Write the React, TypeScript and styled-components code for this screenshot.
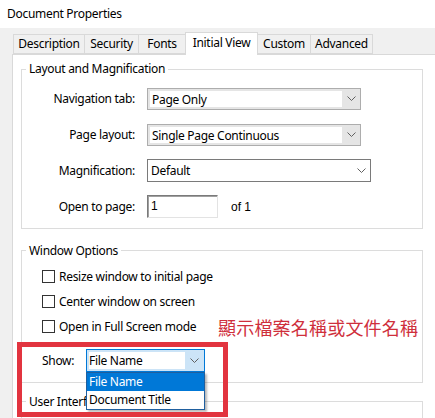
import React from "react";
import styled, { createGlobalStyle } from "styled-components";

const GlobalStyle = createGlobalStyle`
  html, body { margin: 0; padding: 0; background: #f0f0f0; }
  body { font-family: "Noto Sans", "Segoe UI", Arial, sans-serif; font-size: 12px; letter-spacing: -0.3px; color: #000; }
  * { box-sizing: border-box; }
`;

const Window = styled.div`
  position: relative;
  width: 435px;
  height: 418px;
  overflow: hidden;
  background: #f0f0f0;
  display: flex;
  flex-direction: column;
`;

const TitleBar = styled.div`
  height: 28px;
  line-height: 27px;
  padding-left: 7px;
  background: #ffffff;
  font-size: 12px;
  flex: none;
`;

const Body = styled.div`
  flex: 1;
  display: flex;
  flex-direction: column;
  padding: 4px 0 0 12px;
`;

const TabStrip = styled.div`
  display: flex;
  align-items: flex-end;
  height: 22px;
  padding-left: 1px;
  flex: none;
`;

const Tab = styled.div<{ $w: number; $active?: boolean }>`
  width: ${(p) => p.$w}px;
  height: ${(p) => (p.$active ? 23 : 20)}px;
  margin-bottom: ${(p) => (p.$active ? -1 : 0)}px;
  margin-right: -1px;
  position: relative;
  z-index: ${(p) => (p.$active ? 2 : 1)};
  border: 1px solid #d9d9d9;
  border-bottom: ${(p) => (p.$active ? "none" : "1px solid #d9d9d9")};
  background: ${(p) => (p.$active ? "#ffffff" : "#f0f0f0")};
  text-align: center;
  line-height: ${(p) => (p.$active ? 19 : 18)}px;
  white-space: nowrap;
`;

const Panel = styled.div`
  flex: 1;
  background: #ffffff;
  border-top: 1px solid #d9d9d9;
  border-left: 1px solid #d9d9d9;
  padding: 6px 12px 0 8px;
`;

const Group = styled.fieldset<{ $gap?: number }>`
  margin: ${(p) => p.$gap ?? 0}px 0 0 0;
  padding: 0;
  border: 1px solid #dcdcdc;
  min-width: 0;
`;

const Legend = styled.legend`
  margin-left: 4px;
  padding: 0 3px;
  font-size: 12px;
  line-height: 16px;
`;

const FormGrid = styled.div`
  display: grid;
  grid-template-columns: 113px max-content;
  grid-auto-rows: 36px;
  column-gap: 12px;
  align-items: center;
  padding: 3.5px 0 3px 0;
`;

const Label = styled.div`
  text-align: right;
  white-space: nowrap;
`;

const Chevron = () => (
  <svg width="9" height="5" viewBox="0 0 9 5" aria-hidden="true">
    <path d="M0.5 0.5 L4.5 4.5 L8.5 0.5" fill="none" stroke="#606060" strokeWidth="1" />
  </svg>
);

const ComboFrame = styled.div<{ $w: number }>`
  width: ${(p) => p.$w}px;
  height: 22px;
  display: flex;
  padding: 2px 0 2px 2px;
  border: 1px solid #adadad;
  background: #e5e5e5;
`;

const ComboField = styled.div`
  flex: 1;
  background: #ffffff;
  padding-left: 2px;
  line-height: 18px;
  white-space: nowrap;
`;

const ComboArrow = styled.div<{ $w: number }>`
  width: ${(p) => p.$w}px;
  display: flex;
  align-items: center;
  justify-content: center;
`;

const PlainSelect = styled.div<{ $w: number }>`
  width: ${(p) => p.$w}px;
  height: 23px;
  display: flex;
  align-items: center;
  border: 1px solid #7a7a7a;
  background: #ffffff;
  padding-left: 3px;
  line-height: 21px;
`;

const PlainText = styled.div`
  flex: 1;
`;

const PageRow = styled.div`
  display: flex;
  align-items: center;
  gap: 13px;
`;

const PageInput = styled.div`
  width: 71px;
  height: 23px;
  border: 1px solid;
  border-color: #7a7a7a #e3e3e3 #e3e3e3 #7a7a7a;
  box-shadow: inset 1px 1px 0 #a0a0a0;
  padding-left: 3px;
  font-family: "Liberation Sans", Arial, sans-serif;
  letter-spacing: 0;
  line-height: 21px;
`;

const ClassicText = styled.span`
  font-family: "Liberation Sans", Arial, sans-serif;
  letter-spacing: 0;
`;

const CheckList = styled.div`
  display: flex;
  flex-direction: column;
  padding: 5px 0 0 20px;
`;

const CheckRow = styled.label`
  height: 25px;
  display: flex;
  align-items: center;
  gap: 4px;
  white-space: nowrap;
`;

const Box = styled.span`
  width: 13px;
  height: 13px;
  border: 1px solid #333333;
  background: #ffffff;
  flex: none;
`;

const ShowRow = styled.div`
  display: flex;
  align-items: center;
  margin: 10px 0 10px 20px;
`;

const ShowLabel = styled.div`
  width: 44px;
`;

const ShowWrap = styled.div`
  position: relative;
`;

const FocusCombo = styled.div`
  width: 119px;
  height: 23px;
  display: flex;
  padding: 2px 0 2px 2px;
  border: 1px solid #0078d7;
  background: #cce4f7;
`;

const FocusField = styled.div`
  flex: 1;
  background: #ffffff;
  padding-left: 0px;
  line-height: 17px;
  white-space: nowrap;
`;

const DropList = styled.div`
  position: absolute;
  top: 100%;
  left: 0;
  width: 119px;
  border: 1px solid #1f5f9f;
  background: #ffffff;
  box-shadow: 2px 2px 2px rgba(0, 0, 0, 0.28);
  z-index: 5;
`;

const DropItem = styled.div<{ $selected?: boolean }>`
  height: 18px;
  line-height: 18px;
  padding-left: 2px;
  background: ${(p) => (p.$selected ? "#0078d7" : "#ffffff")};
  color: ${(p) => (p.$selected ? "#ffffff" : "#000000")};
  white-space: nowrap;
`;

const Spacer = styled.div`
  height: 20px;
`;

const Highlight = styled.div`
  position: absolute;
  left: 17px;
  top: 342px;
  width: 211px;
  height: 75px;
  border: 5px solid #e2343f;
  z-index: 10;
  pointer-events: none;
`;

const Note = styled.div`
  position: absolute;
  left: 218px;
  top: 316px;
  font-family: "Noto Sans CJK TC", "Noto Sans CJK SC", sans-serif;
  font-size: 18px;
  line-height: 22px;
  letter-spacing: 0.2px;
  color: #cf2f3c;
  white-space: nowrap;
  z-index: 10;
`;

const tabs: { label: string; w: number; active?: boolean }[] = [
  { label: "Description", w: 72 },
  { label: "Security", w: 55 },
  { label: "Fonts", w: 48 },
  { label: "Initial View", w: 73, active: true },
  { label: "Custom", w: 54 },
  { label: "Advanced", w: 63 },
];

const checks = [
  "Resize window to initial page",
  "Center window on screen",
  "Open in Full Screen mode",
];

export default function App() {
  return (
    <>
      <GlobalStyle />
      <Window>
        <TitleBar>Document Properties</TitleBar>
        <Body>
          <TabStrip>
            {tabs.map((t) => (
              <Tab key={t.label} $w={t.w} $active={t.active}>
                {t.label}
              </Tab>
            ))}
          </TabStrip>
          <Panel>
            <Group>
              <Legend>Layout and Magnification</Legend>
              <FormGrid>
                <Label>Navigation tab:</Label>
                <ComboFrame $w={214}>
                  <ComboField>Page Only</ComboField>
                  <ComboArrow $w={18}>
                    <Chevron />
                  </ComboArrow>
                </ComboFrame>
                <Label>Page layout:</Label>
                <ComboFrame $w={214}>
                  <ComboField>Single Page Continuous</ComboField>
                  <ComboArrow $w={18}>
                    <Chevron />
                  </ComboArrow>
                </ComboFrame>
                <Label>Magnification:</Label>
                <PlainSelect $w={224}>
                  <PlainText>Default</PlainText>
                  <ComboArrow $w={18}>
                    <Chevron />
                  </ComboArrow>
                </PlainSelect>
                <Label>Open to page:</Label>
                <PageRow>
                  <PageInput>1</PageInput>
                  <ClassicText>of 1</ClassicText>
                </PageRow>
              </FormGrid>
            </Group>
            <Group $gap={14}>
              <Legend>Window Options</Legend>
              <CheckList>
                {checks.map((c) => (
                  <CheckRow key={c}>
                    <Box />
                    {c}
                  </CheckRow>
                ))}
              </CheckList>
              <ShowRow>
                <ShowLabel>Show:</ShowLabel>
                <ShowWrap>
                  <FocusCombo>
                    <FocusField>File Name</FocusField>
                    <ComboArrow $w={19}>
                      <Chevron />
                    </ComboArrow>
                  </FocusCombo>
                  <DropList>
                    <DropItem $selected>File Name</DropItem>
                    <DropItem>Document Title</DropItem>
                  </DropList>
                </ShowWrap>
              </ShowRow>
            </Group>
            <Group $gap={11}>
              <Legend>User Interface Options</Legend>
              <Spacer />
            </Group>
          </Panel>
        </Body>
        <Note>顯示檔案名稱或文件名稱</Note>
        <Highlight />
      </Window>
    </>
  );
}
